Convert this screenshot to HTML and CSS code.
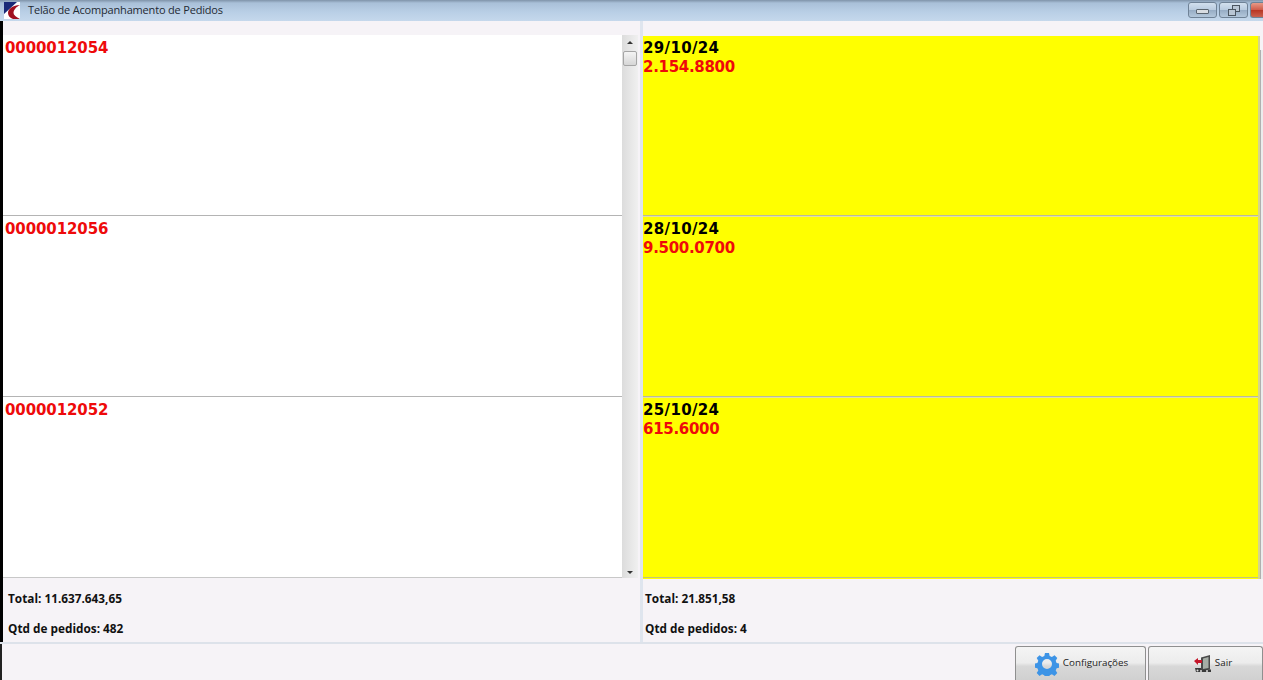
FILE: index.html
```html
<!DOCTYPE html>
<html lang="pt">
<head>
<meta charset="utf-8">
<title>Telão de Acompanhamento de Pedidos</title>
<link rel="stylesheet" href="styles.css">
</head>
<body>
<div class="window">
  <header class="titlebar">
    <svg class="app-icon" width="16" height="17" viewBox="0 0 16 17">
      <rect width="16" height="17" fill="#fff"/>
      <path d="M0 0H13L0 12Z" fill="#1a2a78"/>
      <path d="M16 3C9 3 4 7 4 11C4 14 6 16 9 17H16C12 15 9.500 13 9.500 11C9.500 8 12 5 16 3Z" fill="#a01020"/>
    </svg>
    <span class="title">Telão de Acompanhamento de Pedidos</span>
    <div class="controls">
      <button class="ctl"><span class="min-glyph"></span></button>
      <button class="ctl"><svg width="12" height="11" viewBox="0 0 12 11"><rect x="4.500" y="0.500" width="7" height="6" fill="#b9c6d4" stroke="#4a5560"/><rect x="0.500" y="4.500" width="7" height="6" fill="#b9c6d4" stroke="#4a5560"/></svg></button>
      <button class="ctl ctl-close"></button>
    </div>
  </header>
  <main class="panes">
    <section class="pane pane-left">
      <div class="list-wrap">
        <div class="list">
          <div class="row"><span class="code">0000012054</span></div>
          <div class="row"><span class="code">0000012056</span></div>
          <div class="row"><span class="code">0000012052</span></div>
        </div>
        <div class="scrollbar">
          <span class="arrow arrow-up"></span>
          <span class="thumb"></span>
          <span class="arrow arrow-down"></span>
        </div>
      </div>
      <div class="summary">
        <p class="sum-line">Total: 11.637.643,65</p>
        <p class="sum-line">Qtd de pedidos: 482</p>
      </div>
    </section>
    <section class="pane pane-right">
      <div class="cards-wrap">
        <div class="cards">
          <div class="card"><span class="date">29/10/24</span><span class="value">2.154.8800</span></div>
          <div class="card"><span class="date">28/10/24</span><span class="value">9.500.0700</span></div>
          <div class="card"><span class="date">25/10/24</span><span class="value">615.6000</span></div>
        </div>
        <div class="edge"></div>
        <div class="sliver"></div>
      </div>
      <div class="summary">
        <p class="sum-line">Total: 21.851,58</p>
        <p class="sum-line">Qtd de pedidos: 4</p>
      </div>
    </section>
  </main>
  <footer class="footer">
    <button class="btn btn-config">
      <svg width="24" height="24" viewBox="0 0 24 24"><path fill="#3d94e6" fill-rule="evenodd" d="M10 1h4l.7 3 2.200.9 2.600-1.600 2.800 2.800-1.600 2.600.9 2.200 3 .7v4l-3 .7-.9 2.200 1.600 2.600-2.800 2.800-2.600-1.600-2.200.9-.7 3h-4l-.7-3-2.200-.9-2.600 1.600-2.800-2.800 1.600-2.600-.9-2.200-3-.7v-4l3-.7.9-2.200-1.600-2.600 2.800-2.800 2.600 1.600 2.200-.9ZM12 7a5 5 0 1 0 0 10a5 5 0 0 0 0-10Z"/></svg>
      <span class="btn-label">Configurações</span>
    </button>
    <button class="btn btn-exit">
      <svg width="18" height="18" viewBox="0 0 18 18"><path d="M7 2.500 16 0V14.500L7 16Z" fill="#4a4a4a"/><path d="M9 3.500 14.500 2V13L9 14Z" fill="#a5aca5"/><path d="M0 6 4 3V5H8V8H4V10Z" fill="#c4162a"/><path d="M1 13H7V14.500H17V17H2Z" fill="#3a3a3a"/><circle cx="3.500" cy="15.500" r="1" fill="#ddd"/><circle cx="7" cy="16" r="1" fill="#ddd"/><circle cx="13" cy="16" r="1" fill="#ddd"/></svg>
      <span class="btn-label">Sair</span>
    </button>
  </footer>
</div>
</body>
</html>
```
FILE: styles.css
```css
* { box-sizing: border-box; }
html, body { margin: 0; height: 100%; overflow: hidden; }
body { background: #f6f3f7; font-family: "DejaVu Sans", sans-serif; }
.window { width: 1263px; height: 680px; display: flex; flex-direction: column; }
.titlebar {
  height: 21px; flex: none; display: flex; align-items: center; padding-left: 4px;
  background: linear-gradient(180deg, #7f93a9 0, #a9c0d8 3px, #b9cfe6 12px, #c5d8ec 21px);
}
.app-icon { flex: none; }
.title { margin-left: 8px; padding-bottom: 2px; font-family: "Open Sans", sans-serif; font-size: 11px; letter-spacing: -0.18px; color: #1f2a33; }
.controls { margin-left: auto; display: flex; gap: 2px; align-self: flex-start; padding-top: 2px; }
.ctl {
  width: 29px; height: 16px; padding: 0; display: flex; align-items: center; justify-content: center;
  border: 1px solid #6f8296; border-radius: 3px;
  background: linear-gradient(180deg, #d2e0ee 0, #b8cade 50%, #96acc4 51%, #b3c7db 100%);
}
.ctl-close { width: 13px; border-radius: 3px 0 0 3px; border-right: 0; background: linear-gradient(180deg, #e79a88 0, #cf5a48 50%, #b83422 51%, #c9604e 100%); }
.min-glyph { width: 13px; height: 5px; margin-top: 2px; background: #d8dde2; border: 1px solid #5a6570; border-radius: 1px; }
.panes { flex: none; height: 623px; display: flex; border-bottom: 2px solid #dde2ea; }
.pane { display: flex; flex-direction: column; padding-top: 14px; }
.pane-left { width: 640px; flex: none; border-left: 3px solid #000; }
.pane-right { flex: 1; min-width: 0; padding-top: 15px; border-left: 3px solid #dfe5ee; }
.list-wrap { display: flex; height: 543px; flex: none; padding-right: 2px; }
.list { flex: 1; min-width: 0; background: #fff; display: flex; flex-direction: column; border-bottom: 1px solid #c8c8c8; }
.row { height: 181px; padding: 4px 0 0 2px; border-bottom: 1px solid #b4b4b4; }
.row:last-child { flex: 1; border-bottom: 0; }
.code { display: block; font-size: 15px; line-height: 19px; font-weight: 700; letter-spacing: -0.1px; color: #ee0a0a; }
.scrollbar { width: 16px; flex: none; background: linear-gradient(90deg, #dcdcdc, #f0f0f0); display: flex; flex-direction: column; align-items: center; }
.arrow { width: 0; height: 0; border-left: 3px solid transparent; border-right: 3px solid transparent; }
.arrow-up { margin-top: 6px; border-bottom: 3px solid #333; }
.thumb { width: 14px; height: 15px; margin-top: 7px; border: 1px solid #a5a5a5; border-radius: 2px; background: linear-gradient(180deg, #f4f4f4, #d6d6d6); }
.arrow-down { margin-top: auto; margin-bottom: 4px; border-top: 3px solid #333; }
.cards-wrap { display: flex; height: 543px; flex: none; }
.cards { width: 615px; flex: none; display: flex; flex-direction: column; border-bottom: 1px solid #ff0; }
.card { height: 180px; background: #ff0; border-bottom: 1px solid #b9b9a0; padding: 3px 0 0 0; }
.card + .card { height: 181px; padding-top: 3px; border-top: 1px solid #e2e2a0; }
.card:last-child { flex: 1; border-bottom: 1px solid #c4c47a; }
.date { display: block; font-size: 15px; line-height: 19px; font-weight: 700; letter-spacing: 0.35px; color: #000; }
.value { display: block; font-size: 15px; line-height: 19px; font-weight: 700; letter-spacing: -0.3px; color: #ee0a0a; }
.edge { width: 2px; flex: none; background: #d6d68a; }
.sliver { flex: 1; margin-top: 14px; border-left: 1px solid #b0b0b0; background: #ececec; }
.summary { flex: 1; display: flex; flex-direction: column; padding: 12px 0 0 5px; gap: 14px; }
.sum-line { margin: 0; font-family: "Open Sans", sans-serif; font-size: 11.8px; line-height: 16px; font-weight: 700; color: #111; }
.pane-right .summary { padding: 11px 0 0 2px; }
.footer { flex: 1; min-height: 0; display: flex; justify-content: flex-end; gap: 2px; padding-top: 2px; border-left: 2px solid #222; }
.btn {
  height: 36px; display: flex; align-items: center; justify-content: center; gap: 4px; padding: 0 0 2px;
  border: 1px solid #8f8f8f; border-bottom: 0; border-radius: 3px 3px 0 0;
  background: linear-gradient(180deg, #f4f4f4 0, #ececec 45%, #d8d8d8 55%, #cfcfcf 100%);
  font-family: "Open Sans", sans-serif; font-size: 9.8px; color: #222;
}
.btn-label { margin-bottom: 2px; }
.btn-config { width: 131px; padding-left: 2px; }
.btn-exit { width: 115px; padding-left: 15px; gap: 3px; }
```
